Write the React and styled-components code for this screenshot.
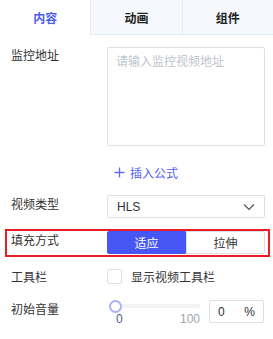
import React from "react";
import styled, { createGlobalStyle } from "styled-components";

const Global = createGlobalStyle`
  html, body { margin: 0; padding: 0; background: #fff; }
  body { font-family: "Noto Sans CJK SC", "Liberation Sans", sans-serif; font-size: 12px; color: #333; }
  * { box-sizing: border-box; }
`;

const Panel = styled.div`
  width: 273px;
  height: 339px;
  background: #fff;
  overflow: hidden;
`;

const Tabs = styled.div`
  display: flex;
  height: 35px;
`;

const Tab = styled.div`
  flex: 1;
  display: flex;
  align-items: center;
  justify-content: center;
  font-weight: 700;
  font-size: 12px;
  color: ${(p) => (p.$active ? "#4b5cf5" : "#222")};
  background: ${(p) => (p.$active ? "#fff" : "#f5f8fc")};
  border-left: ${(p) => (p.$first ? "none" : "1px solid #e6ebf2")};
  border-bottom: ${(p) => (p.$active ? "1px solid #fff" : "1px solid #e6ebf2")};
`;

const Form = styled.div`
  display: flex;
  flex-direction: column;
  padding: 0 8px 0 11px;
`;

const Row = styled.div`
  display: flex;
  align-items: flex-start;
  margin-top: ${(p) => p.$mt || 0}px;
`;

const Highlight = styled.div`
  display: flex;
  align-items: flex-start;
  margin: ${(p) => p.$mt || 0}px -5px 0 -6px;
  padding: 0 3px 1px 4px;
  border: 2px solid #ec1c24;
`;

const Label = styled.div`
  width: 96px;
  flex: none;
  line-height: 16px;
  padding-top: ${(p) => p.$pt || 0}px;
  color: #333;
`;

const Control = styled.div`
  flex: 1;
  min-width: 0;
`;

const TextArea = styled.div`
  height: 99px;
  border: 1px solid #dcdfe6;
  border-radius: 2px;
  padding: 5px 8px;
  line-height: 16px;
  color: #c0c4cc;
`;

const LinkRow = styled.div`
  display: flex;
  align-items: center;
  height: 20px;
  margin-top: 16px;
  padding-left: 103px;
  color: #5060f5;
  gap: 5px;
`;

const Select = styled.div`
  height: 23px;
  border: 1px solid #dcdfe6;
  border-radius: 2px;
  display: flex;
  align-items: center;
  justify-content: space-between;
  padding: 0 9px 0 9px;
  font-family: "Liberation Sans", Arial, sans-serif;
  font-size: 12px;
  color: #333;
`;

const Segmented = styled.div`
  display: flex;
  height: 23px;
`;

const Seg = styled.div`
  flex: 1;
  display: flex;
  align-items: center;
  justify-content: center;
  background: ${(p) => (p.$on ? "#4757f5" : "#fff")};
  color: ${(p) => (p.$on ? "#fff" : "#333")};
  border: 1px solid ${(p) => (p.$on ? "#4757f5" : "#dcdfe6")};
  border-radius: ${(p) => (p.$on ? "2px 0 0 2px" : "0 2px 2px 0")};
`;

const Check = styled.label`
  display: flex;
  align-items: center;
  gap: 9px;
  color: #333;
  line-height: 15px;
`;

const Box = styled.span`
  width: 15px;
  height: 15px;
  border: 1px solid #dcdfe6;
  border-radius: 2px;
  background: #fff;
  flex: none;
`;

const VolumeWrap = styled.div`
  display: flex;
  align-items: flex-start;
`;

const Slider = styled.div`
  width: 95px;
  flex: none;
  position: relative;
  height: 23px;
`;

const Track = styled.div`
  position: absolute;
  left: 3px;
  right: 2px;
  top: 4px;
  height: 4px;
  border-radius: 2px;
  background: #f2f3f5;
`;

const Thumb = styled.div`
  position: absolute;
  left: 2px;
  top: 0px;
  width: 13px;
  height: 13px;
  border-radius: 50%;
  border: 2px solid #a9b0f8;
  background: #fff;
`;

const Ticks = styled.div`
  position: absolute;
  left: 9px;
  right: 2px;
  top: 12px;
  display: flex;
  justify-content: space-between;
  font-family: "Liberation Sans", Arial, sans-serif;
  font-size: 12px;
  line-height: 14px;
`;

const Tick = styled.span`
  color: ${(p) => (p.$muted ? "#a0a4ac" : "#555a80")};
`;

const NumInput = styled.div`
  margin-left: 7px;
  width: 55px;
  height: 23px;
  border: 1px solid #dcdfe6;
  border-radius: 2px;
  display: flex;
  align-items: center;
  justify-content: space-between;
  padding: 0 8px 0 8px;
  font-family: "Liberation Sans", Arial, sans-serif;
  font-size: 12px;
  color: #333;
`;

export default function App() {
  return (
    <Panel>
      <Global />
      <Tabs>
        <Tab $active $first>内容</Tab>
        <Tab>动画</Tab>
        <Tab>组件</Tab>
      </Tabs>
      <Form>
        <Row $mt={12}>
          <Label>监控地址</Label>
          <Control>
            <TextArea>请输入监控视频地址</TextArea>
          </Control>
        </Row>
        <LinkRow>
          <svg width="11" height="11" viewBox="0 0 11 11">
            <path d="M5.5 0.5V10.5M0.5 5.5H10.5" stroke="#5b6bf5" strokeWidth="1.3" fill="none" />
          </svg>
          <span>插入公式</span>
        </LinkRow>
        <Row $mt={13}>
          <Label $pt={1}>视频类型</Label>
          <Control>
            <Select>
              <span>HLS</span>
              <svg width="12" height="8" viewBox="0 0 12 8">
                <path d="M1 1.5L6 6.5L11 1.5" stroke="#555" strokeWidth="1.2" fill="none" />
              </svg>
            </Select>
          </Control>
        </Row>
        <Highlight $mt={11}>
          <Label $pt={1}>填充方式</Label>
          <Control>
            <Segmented>
              <Seg $on>适应</Seg>
              <Seg>拉伸</Seg>
            </Segmented>
          </Control>
        </Highlight>
        <Row $mt={12}>
          <Label>工具栏</Label>
          <Control>
            <Check>
              <Box />
              <span>显示视频工具栏</span>
            </Check>
          </Control>
        </Row>
        <Row $mt={15}>
          <Label $pt={1}>初始音量</Label>
          <Control>
            <VolumeWrap>
              <Slider>
                <Track />
                <Thumb />
                <Ticks>
                  <Tick>0</Tick>
                  <Tick $muted>100</Tick>
                </Ticks>
              </Slider>
              <NumInput>
                <span>0</span>
                <span>%</span>
              </NumInput>
            </VolumeWrap>
          </Control>
        </Row>
      </Form>
    </Panel>
  );
}
